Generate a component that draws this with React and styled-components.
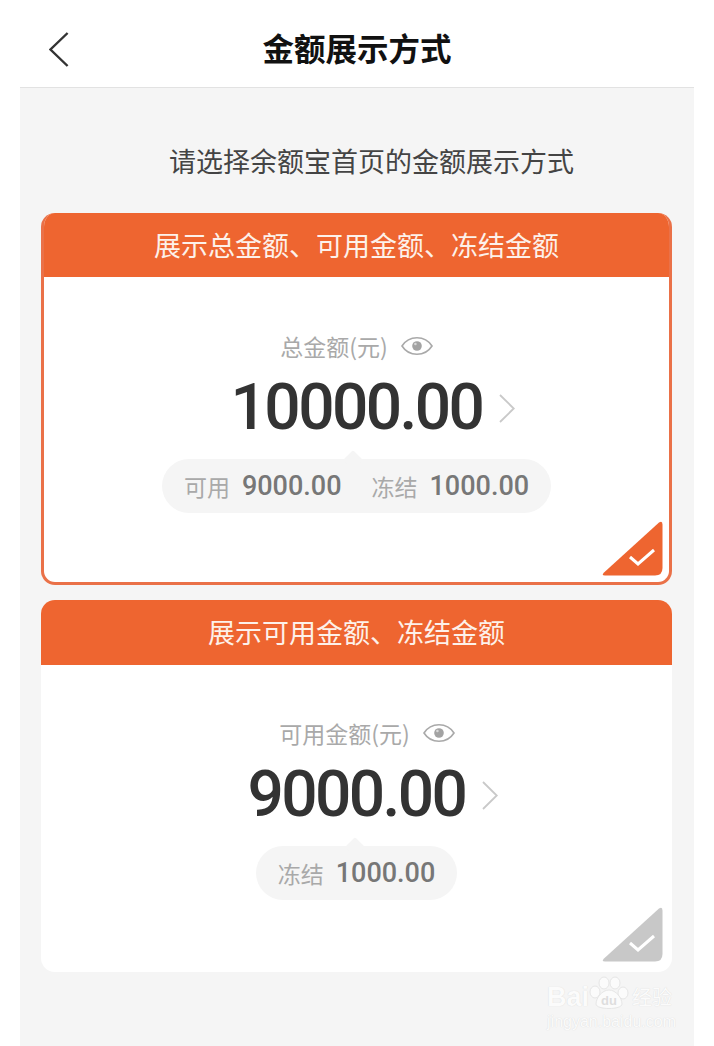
import React from "react";
import styled, { createGlobalStyle } from "styled-components";

const orange = "#ee6530";

const GlobalStyle = createGlobalStyle`
  html, body {
    margin: 0;
    padding: 0;
    background: #fff;
  }
  body {
    font-family: "Noto Sans CJK SC", "Noto Sans", sans-serif;
  }
`;

function Eye() {
  return (
    <svg width="32" height="24" viewBox="0 0 32 24" fill="none">
      <path d="M1 12 C8 1 24 1 31 12 C24 23 8 23 1 12 Z" stroke="#a9a9a9" strokeWidth="1.6" />
      <circle cx="16" cy="12" r="4.8" fill="#a3a3a3" />
      <circle cx="14.4" cy="10" r="1.3" fill="#d8d8d8" />
    </svg>
  );
}

function Chevron({ size, color, weight, left }) {
  const h = size;
  const w = size * 0.56;
  return (
    <svg width={w} height={h} viewBox={`0 0 ${w} ${h}`} fill="none">
      {left ? (
        <path d={`M${w - 1} 1 L1.5 ${h / 2} L${w - 1} ${h - 1}`} stroke={color} strokeWidth={weight} />
      ) : (
        <path d={`M1 1 L${w - 1.5} ${h / 2} L1 ${h - 1}`} stroke={color} strokeWidth={weight} />
      )}
    </svg>
  );
}

function Corner({ selected }) {
  return (
    <CornerBox $selected={selected}>
      <svg width="61" height="55" viewBox="0 0 61 55">
        <path
          d="M57 1.5 Q60.5 -0.8 60.5 3.5 L60.5 47 Q60.5 54.5 53 54.5 L3 54.5 Q-1 54.5 2 51.5 Z"
          fill={selected ? orange : "#c8c8c8"}
        />
        <path d="M28 36 L36 43 L52 29" fill="none" stroke="#fff" strokeWidth="3" />
      </svg>
    </CornerBox>
  );
}

function Option({ title, label, amount, chips, selected }) {
  return (
    <Card $selected={selected}>
      <CardHead $selected={selected}>{title}</CardHead>
      <CardBody $selected={selected}>
        <Label $selected={selected}>
          <LabelText>{label}</LabelText>
          <Eye />
        </Label>
        <AmountRow>
          <Amount>{amount}</Amount>
          <Chevron size={29} color="#c9c9c9" weight={1.8} />
        </AmountRow>
        <Pill $selected={selected}>
          {chips.map((c) => (
            <Chip key={c.name}>
              <ChipName>{c.name}</ChipName>
              <ChipValue>{c.value}</ChipValue>
            </Chip>
          ))}
        </Pill>
        <Corner selected={selected} />
      </CardBody>
    </Card>
  );
}

export default function App() {
  return (
    <Page>
      <GlobalStyle />
      <Header>
        <BackButton>
          <Chevron size={35} color="#333" weight={2.4} left />
        </BackButton>
        <Title>金额展示方式</Title>
      </Header>
      <Panel>
        <Hint>请选择余额宝首页的金额展示方式</Hint>
        <Option
          selected
          title="展示总金额、可用金额、冻结金额"
          label="总金额(元)"
          amount="10000.00"
          chips={[
            { name: "可用", value: "9000.00" },
            { name: "冻结", value: "1000.00" },
          ]}
        />
        <Option
          title="展示可用金额、冻结金额"
          label="可用金额(元)"
          amount="9000.00"
          chips={[{ name: "冻结", value: "1000.00" }]}
        />
        <Watermark>
          <WatermarkRow>
            <WatermarkBai>Bai</WatermarkBai>
            <Paw>
              <svg width="42" height="34" viewBox="0 0 42 34">
                <g fill="#fbfbfb" stroke="#e6e6e6" strokeWidth="1">
                  <ellipse cx="7" cy="16" rx="5" ry="6" />
                  <ellipse cx="16" cy="7" rx="5" ry="6" />
                  <ellipse cx="27" cy="7" rx="5" ry="6" />
                  <ellipse cx="35" cy="17" rx="5" ry="6" />
                  <path d="M21 14 C14 14 8 22 8 28 C8 34 34 34 34 28 C34 22 28 14 21 14 Z" />
                </g>
                <text x="21" y="29" textAnchor="middle" fontFamily="Liberation Sans" fontSize="13" fontWeight="700" fill="#dedede">
                  du
                </text>
              </svg>
            </Paw>
            <WatermarkCn>经验</WatermarkCn>
          </WatermarkRow>
          <WatermarkUrl>jingyan.baidu.com</WatermarkUrl>
        </Watermark>
      </Panel>
    </Page>
  );
}

const Page = styled.div`
  width: 714px;
  height: 1046px;
  box-sizing: border-box;
  padding: 0 20px;
  background: #fff;
  display: flex;
  flex-direction: column;
  overflow: hidden;
`;
const Header = styled.header`
  position: relative;
  height: 88px;
  flex: none;
  box-sizing: border-box;
  border-bottom: 1px solid #e2e2e2;
  display: flex;
  align-items: center;
  justify-content: center;
  padding-top: 7px;
`;
const BackButton = styled.div`
  position: absolute;
  left: 29px;
  top: 32px;
  line-height: 0;
`;
const Title = styled.h1`
  margin: 0;
  font-size: 31.5px;
  font-weight: 700;
  line-height: 44px;
  color: #111;
`;
const Panel = styled.main`
  position: relative;
  flex: 1;
  background: #f5f5f5;
  padding: 0 21px;
  display: flex;
  flex-direction: column;
  gap: 15px;
`;
const Hint = styled.div`
  height: 38px;
  margin: 54px 0 18px;
  padding-left: 128px;
  font-size: 27px;
  line-height: 38px;
  color: #444;
  white-space: nowrap;
`;
const Card = styled.section`
  width: 631px;
  height: 372px;
  flex: none;
  border-radius: 14px;
  overflow: hidden;
  display: flex;
  flex-direction: column;
  background: #fff;
  box-sizing: border-box;
  border: ${(p) => (p.$selected ? "3px solid #ea7148" : "none")};
  border-top: none;
`;
const CardHead = styled.div`
  height: ${(p) => (p.$selected ? "64px" : "65px")};
  flex: none;
  background: ${orange};
  color: #fdf1ea;
  font-size: 27px;
  line-height: 64px;
  text-align: center;
`;
const CardBody = styled.div`
  position: relative;
  flex: 1;
  display: flex;
  flex-direction: column;
  align-items: center;
  padding-top: ${(p) => (p.$selected ? "51px" : "50px")};
`;
const Label = styled.div`
  display: flex;
  align-items: center;
  gap: 13px;
  height: 36px;
  margin-left: ${(p) => (p.$selected ? "0" : "21px")};
`;
const LabelText = styled.span`
  font-size: 23px;
  line-height: 36px;
  color: #a9a9a9;
`;
const AmountRow = styled.div`
  display: flex;
  align-items: center;
  gap: 17px;
  height: 76px;
  margin-top: 6px;
  padding-left: 33px;
`;
const Amount = styled.div`
  font-family: Roboto, "Liberation Sans", sans-serif;
  font-size: 64px;
  font-weight: 500;
  letter-spacing: -2.6px;
  line-height: 76px;
  color: #333;
`;
const Pill = styled.div`
  position: relative;
  display: flex;
  gap: 30px;
  align-items: center;
  height: 54px;
  margin-top: 13px;
  padding: 0 22px;
  border-radius: 27px;
  background: #f5f5f5;
  &::before {
    content: "";
    position: absolute;
    top: -6px;
    left: ${(p) => (p.$selected ? "184px" : "92px")};
    width: 14px;
    height: 14px;
    background: #f5f5f5;
    transform: rotate(45deg);
    border-radius: 2px;
  }
`;
const Chip = styled.div`
  position: relative;
  display: flex;
  align-items: center;
  gap: 12px;
  white-space: nowrap;
`;
const ChipName = styled.span`
  font-size: 23px;
  color: #a9a9a9;
`;
const ChipValue = styled.span`
  font-family: Roboto, "Liberation Sans", sans-serif;
  font-size: 27px;
  font-weight: 500;
  color: #777;
`;
const CornerBox = styled.div`
  position: absolute;
  right: ${(p) => (p.$selected ? "6px" : "9px")};
  bottom: ${(p) => (p.$selected ? "6px" : "10px")};
  line-height: 0;
`;
const Watermark = styled.div`
  position: absolute;
  right: 18px;
  top: 889px;
  display: flex;
  flex-direction: column;
  align-items: flex-start;
`;
const WatermarkRow = styled.div`
  display: flex;
  align-items: flex-end;
  height: 33px;
`;
const WatermarkBai = styled.div`
  font-family: "Liberation Sans", sans-serif;
  font-size: 27px;
  font-weight: 700;
  line-height: 26px;
  color: #fbfbfb;
  text-shadow: 0 0 1px #d4d4d4;
`;
const Paw = styled.div`
  margin-left: -1px;
  line-height: 0;
`;
const WatermarkCn = styled.div`
  margin-left: 2px;
  font-size: 20px;
  line-height: 26px;
  color: #fbfbfb;
  text-shadow: 0 0 1px #d4d4d4;
`;
const WatermarkUrl = styled.div`
  margin-top: 3px;
  font-family: "Liberation Sans", sans-serif;
  font-size: 16px;
  line-height: 18px;
  color: #fbfbfb;
  text-shadow: 0 0 1px #d4d4d4;
`;
